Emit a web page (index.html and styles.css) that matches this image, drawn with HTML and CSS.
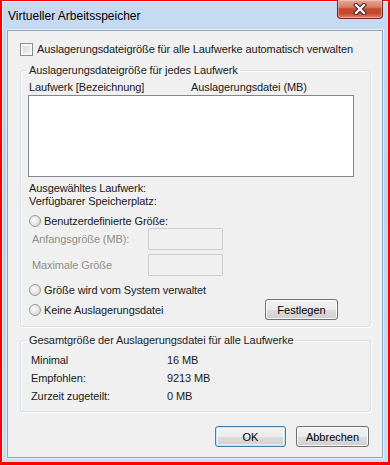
FILE: index.html
```html
<!DOCTYPE html>
<html lang="de">
<head>
    <meta charset="UTF-8">
    <meta name="viewport" content="width=device-width, initial-scale=1.0">
    <title>Virtueller Arbeitsspeicher</title>
    <link rel="stylesheet" href="styles.css">
</head>
<body>
    <div class="screen">
        <div class="window">
            <div class="titlebar">
                <span class="title">Virtueller Arbeitsspeicher</span>
                <button class="close" title="Schließen">
                    <svg width="14" height="12" viewBox="0 0 14 12">
                        <path d="M3 2 L11 10 M11 2 L3 10" stroke="#4a2a26" stroke-width="4.4" stroke-linecap="square"/>
                        <path d="M3 2 L11 10 M11 2 L3 10" stroke="#ffffff" stroke-width="2.2" stroke-linecap="square"/>
                    </svg>
                </button>
            </div>

            <div class="client">
                <label class="check-row">
                    <span class="checkbox"></span>
                    Auslagerungsdateigröße für alle Laufwerke automatisch verwalten
                </label>

                <fieldset class="group group-drives">
                    <legend>Auslagerungsdateigröße für jedes Laufwerk</legend>
                    <div class="list-head">
                        <span class="col-drive">Laufwerk [Bezeichnung]</span>
                        <span>Auslagerungsdatei (MB)</span>
                    </div>
                    <div class="listbox"></div>

                    <div class="info first">Ausgewähltes Laufwerk:</div>
                    <div class="info">Verfügbarer Speicherplatz:</div>

                    <div class="radio-row custom"><span class="radio"></span>Benutzerdefinierte Größe:</div>
                    <div class="field-row start">
                        <span class="field-label">Anfangsgröße (MB):</span>
                        <span class="textbox"></span>
                    </div>
                    <div class="field-row">
                        <span class="field-label">Maximale Größe</span>
                        <span class="textbox"></span>
                    </div>
                    <div class="radio-row system"><span class="radio"></span>Größe wird vom System verwaltet</div>
                    <div class="radio-row none">
                        <span class="radio"></span>Keine Auslagerungsdatei
                        <button class="btn btn-set">Festlegen</button>
                    </div>
                </fieldset>

                <fieldset class="group group-total">
                    <legend>Gesamtgröße der Auslagerungsdatei für alle Laufwerke</legend>
                    <div class="total-row"><span class="total-label">Minimal</span><span>16 MB</span></div>
                    <div class="total-row"><span class="total-label">Empfohlen:</span><span>9213 MB</span></div>
                    <div class="total-row"><span class="total-label">Zurzeit zugeteilt:</span><span>0 MB</span></div>
                </fieldset>

                <div class="actions">
                    <button class="btn btn-ok">OK</button>
                    <button class="btn btn-cancel">Abbrechen</button>
                </div>
            </div>
        </div>
    </div>
</body>
</html>
```

FILE: styles.css
```css
* {
    box-sizing: border-box;
}
body {
    margin: 0;
    font-family: 'Liberation Sans', Arial, sans-serif;
    font-size: 11px;
    letter-spacing: -0.1px;
    color: #1a1a1a;
}
.screen {
    width: 390px;
    height: 465px;
    border-style: solid;
    border-color: #ff0000;
    border-width: 1px 2px 3px 2px;
    background: #ff0000;
}
.window {
    height: 100%;
    display: flex;
    flex-direction: column;
    padding: 0 5px 4px 5px;
    background: linear-gradient(180deg, #c6dbf1 0%, #bcd4ee 40%, #c9dcf1 100%);
    box-shadow: inset 1px 1px 0 rgba(255,255,255,0.7);
}
.titlebar {
    height: 29px;
    display: flex;
    justify-content: space-between;
    align-items: flex-start;
}
.title {
    margin-top: 8px;
    margin-left: 1px;
    font-size: 12px;
    letter-spacing: 0;
    color: #000;
}
.close {
    width: 46px;
    height: 19px;
    margin-top: -1px;
    padding: 0;
    border: 1px solid #6b2a22;
    border-top: none;
    border-radius: 0 0 4px 4px;
    background: linear-gradient(180deg, #e9a898 0%, #d77b66 40%, #c7452f 50%, #c64a34 75%, #d98468 100%);
    box-shadow: inset 0 0 0 1px rgba(255,220,210,0.45);
    display: flex;
    align-items: center;
    justify-content: center;
}
.client {
    flex: 1;
    background: #f0f0f0;
    border: 1px solid #8fa5ba;
    box-shadow: 0 0 0 1px rgba(255,255,255,0.55);
    padding: 12px 11px 0 12px;
    display: flex;
    flex-direction: column;
    white-space: nowrap;
}

/* checkbox + radio */
.check-row {
    display: flex;
    align-items: center;
    height: 13px;
    line-height: 13px;
}
.checkbox {
    flex-shrink: 0;
    width: 13px;
    height: 13px;
    margin-right: 4px;
    border: 1px solid #8e8f8f;
    background: linear-gradient(135deg, #d6d6d6 0%, #f4f4f4 100%);
    box-shadow: inset 0 0 0 2px #f5f5f5;
}
.radio {
    flex-shrink: 0;
    width: 12px;
    height: 12px;
    margin-right: 3px;
    border: 1px solid #9a9a9a;
    border-radius: 50%;
    background: radial-gradient(circle at 40% 40%, #fdfdfd 0%, #e2e2e2 55%, #c9c9c9 100%);
}

/* group boxes */
.group {
    margin: 0;
    border: 1px solid #d5dfe5;
    border-radius: 3px;
    padding: 0 16px 6px 7px;
    min-width: 0;
    box-shadow: 1px 1px 0 #ffffff, inset 1px 1px 0 #ffffff;
}
.group legend {
    padding: 0 2px;
    margin-left: -1px;
    line-height: 14px;
}
.group-drives {
    margin-top: 7px;
}
.list-head {
    display: flex;
    padding-top: 4px;
    padding-left: 1px;
    line-height: 13px;
}
.col-drive {
    width: 162px;
}
.listbox {
    height: 82px;
    margin-top: 1px;
    background: #ffffff;
    border: 1px solid #828790;
}
.info {
    line-height: 13px;
    padding-left: 1px;
}
.info.first {
    margin-top: 5px;
}
.radio-row {
    display: flex;
    align-items: center;
    height: 17px;
    padding-left: 1px;
}
.radio-row.custom {
    margin-top: 4px;
}
.radio-row.system {
    margin-top: 5px;
}
.radio-row.none {
    height: 21px;
    margin-top: 1px;
}
.field-row {
    display: flex;
    align-items: center;
    height: 22px;
    margin-top: 4px;
    padding-left: 4px;
    color: #8d8d8d;
}
.field-row.start {
    margin-top: -1px;
}
.field-label {
    width: 116px;
}
.textbox {
    width: 75px;
    height: 22px;
    border: 1px solid #c9cdd1;
    background: #f0f0f0;
    border-radius: 1px;
}

/* buttons */
.btn {
    font-family: inherit;
    font-size: 11px;
    color: #000;
    height: 21px;
    padding: 0;
    border: 1px solid #707070;
    border-radius: 3px;
    background: linear-gradient(180deg, #f2f2f2 0%, #ebebeb 50%, #dddddd 51%, #cfcfcf 100%);
    box-shadow: inset 0 0 0 1px rgba(255,255,255,0.8);
}
.btn-set {
    width: 73px;
    margin-left: auto;
    margin-right: 16px;
}
.btn-ok {
    width: 71px;
    border-color: #3c7fb1;
    box-shadow: inset 0 0 0 1px #c4e5f6, inset 0 0 0 2px rgba(255,255,255,0.5);
}
.btn-cancel {
    width: 73px;
}

/* totals */
.group-total {
    margin-top: 6px;
}
.total-row {
    display: flex;
    height: 18px;
    align-items: center;
    padding-left: 3px;
}
.total-row:first-of-type {
    margin-top: 4px;
}
.total-label {
    width: 136px;
}
.actions {
    display: flex;
    justify-content: flex-end;
    gap: 10px;
    margin-top: 14px;
    margin-right: 2px;
}
```
